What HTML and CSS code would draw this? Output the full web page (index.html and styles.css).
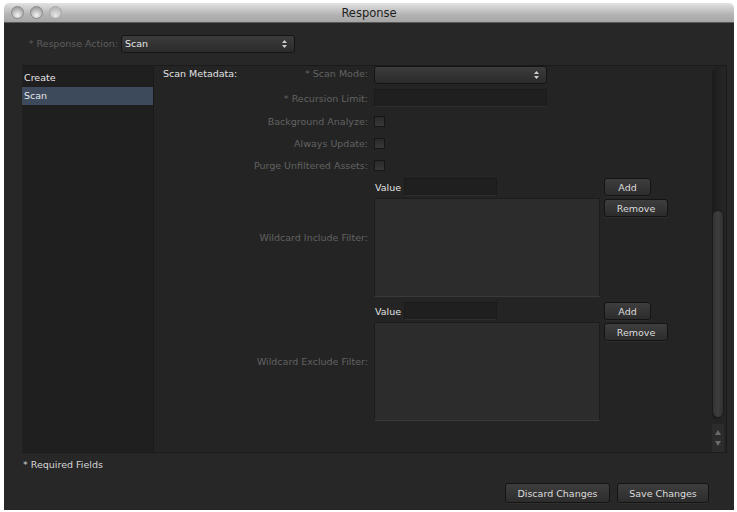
FILE: index.html
```html
<!DOCTYPE html>
<html>
<head>
    <meta charset="utf-8">
    <title>Response</title>
    <link rel="stylesheet" href="styles.css">
</head>
<body>
    <div class="window">
        <div class="titlebar">
            <div class="lights">
                <span class="light"></span>
                <span class="light"></span>
                <span class="light off"></span>
            </div>
            <div class="title">Response</div>
        </div>

        <div class="content">
            <div class="action-row">
                <span class="action-label">* Response Action:</span>
                <div class="select action-select">
                    <span>Scan</span>
                    <svg class="arrows" width="5" height="8" viewBox="0 0 5 8"><path d="M2.5 0 L5 3 L0 3 Z M2.5 8 L5 5 L0 5 Z" fill="#cfcfcf"/></svg>
                </div>
            </div>

            <div class="panel">
                <ul class="nav">
                    <li>Create</li>
                    <li class="active">Scan</li>
                </ul>

                <div class="form">
                    <div class="grid">
                        <div class="label split"><span class="heading">Scan Metadata:</span><span>* Scan Mode:</span></div>
                        <div class="field">
                            <div class="select mode-select">
                                <span></span>
                                <svg class="arrows" width="5" height="8" viewBox="0 0 5 8"><path d="M2.5 0 L5 3 L0 3 Z M2.5 8 L5 5 L0 5 Z" fill="#cfcfcf"/></svg>
                            </div>
                        </div>

                        <div class="label">* Recursion Limit:</div>
                        <div class="field"><div class="input wide"></div></div>

                        <div class="label check-row">Background Analyze:</div>
                        <div class="field check-row"><span class="checkbox"></span></div>

                        <div class="label check-row">Always Update:</div>
                        <div class="field check-row"><span class="checkbox"></span></div>

                        <div class="label check-row">Purge Unfiltered Assets:</div>
                        <div class="field check-row"><span class="checkbox"></span></div>

                        <div class="label">Wildcard Include Filter:</div>
                        <div class="field filter">
                            <div class="filter-main">
                                <div class="value-row">
                                    <span class="value-label">Value</span>
                                    <div class="input value"></div>
                                </div>
                                <div class="listbox"></div>
                            </div>
                            <div class="filter-buttons">
                                <button class="btn add">Add</button>
                                <button class="btn remove">Remove</button>
                            </div>
                        </div>

                        <div class="label">Wildcard Exclude Filter:</div>
                        <div class="field filter">
                            <div class="filter-main">
                                <div class="value-row">
                                    <span class="value-label">Value</span>
                                    <div class="input value"></div>
                                </div>
                                <div class="listbox"></div>
                            </div>
                            <div class="filter-buttons">
                                <button class="btn add">Add</button>
                                <button class="btn remove">Remove</button>
                            </div>
                        </div>
                    </div>

                    <div class="scrollbar">
                        <div class="track"><div class="thumb"></div></div>
                        <div class="steppers">
                            <svg width="6" height="5" viewBox="0 0 6 5"><path d="M3 0 L6 5 L0 5 Z" fill="#6a6a6a"/></svg>
                            <svg width="6" height="5" viewBox="0 0 6 5"><path d="M0 0 L6 0 L3 5 Z" fill="#6a6a6a"/></svg>
                        </div>
                    </div>
                </div>
            </div>

            <div class="required">* Required Fields</div>

            <div class="actions">
                <button class="btn discard">Discard Changes</button>
                <button class="btn save">Save Changes</button>
            </div>
        </div>
    </div>
</body>
</html>
```

FILE: styles.css
```css
body{
    margin:0;
    background:#fff;
    font-family:"DejaVu Sans", sans-serif;
    font-size:9.5px;
}

.window{
    margin:3px 0 0 4px;
    width:730px;
}

.titlebar{
    height:19px;
    position:relative;
    border-radius:5px 5px 0 0;
    background:linear-gradient(#e2e2e2, #b4b4b4 60%, #a6a6a6);
    border-bottom:1px solid #5a5a5a;
    display:flex;
    align-items:center;
    justify-content:center;
}
.lights{
    position:absolute;
    left:7px;
    top:3px;
    display:flex;
    gap:6px;
}
.light{
    width:13px;
    height:13px;
    box-sizing:border-box;
    border-radius:50%;
    border:1px solid #8a8a8a;
    background:radial-gradient(circle at 50% 75%, #f4f4f4, #b8b8b8 55%, #8e8e8e);
}
.light.off{
    border-color:#a8a8a8;
    background:radial-gradient(circle at 50% 75%, #e6e6e6, #c4c4c4 55%, #ababab);
}
.title{
    color:#1e1e1e;
    font-size:11.5px;
}

.content{
    height:487px;
    background:#272727;
    padding:0 7px 0 18px;
    display:flex;
    flex-direction:column;
    box-sizing:border-box;
}

.action-row{
    display:flex;
    align-items:center;
    margin-top:11px;
    height:19px;
}
.action-label{
    width:96px;
    color:#5e5e5e;
    text-align:right;
    margin-right:3px;
}
.select{
    box-sizing:border-box;
    height:18px;
    border:1px solid #151515;
    border-radius:3px;
    background:linear-gradient(#3c3c3c, #2b2b2b);
    display:flex;
    align-items:center;
    justify-content:space-between;
    padding:0 7px 0 3px;
    color:#e4e4e4;
}
.action-select{ width:174px; }
.mode-select{ width:173px; }

.panel{
    margin-top:12px;
    height:388px;
    box-sizing:border-box;
    display:flex;
    border:1px solid #1a1a1a;
    border-left:0;
}
.nav{
    list-style:none;
    margin:0;
    padding:3px 0 0 0;
    width:131px;
    background:#1f1f1f;
    border-right:1px solid #1a1a1a;
}
.nav li{
    height:18px;
    line-height:18px;
    padding-left:2px;
    color:#e6e6e6;
}
.nav li.active{
    background:#3c4a5c;
}

.form{
    flex:1;
    display:flex;
    background:#242424;
}
.grid{
    flex:1;
    display:grid;
    grid-template-columns:205px auto;
    column-gap:6px;
    row-gap:5px;
    padding:0 0 0 9px;
    align-content:start;
    align-items:center;
}
.label{
    color:#626262;
    text-align:right;
}
.split{
    display:flex;
    justify-content:space-between;
    align-self:start;
    padding-top:2px;
}
.heading{
    color:#e2e2e2;
}
.field{
    display:flex;
    align-items:center;
}
.check-row{
    height:17px;
    line-height:19px;
}
.input{
    box-sizing:border-box;
    height:18px;
    background:#1f1f1f;
    border:1px solid #1a1a1a;
    border-bottom-color:#2e2e2e;
}
.input.wide{ width:173px; }
.input.value{ width:93px; }
.checkbox{
    width:11px;
    height:11px;
    margin-top:2px;
    box-sizing:border-box;
    background:linear-gradient(#2a2a2a, #383838);
    border:1px solid #161616;
}

.filter{
    align-items:flex-start;
    gap:4px;
}
.filter-main{
    width:226px;
    display:flex;
    flex-direction:column;
    gap:2px;
}
.value-row{
    display:flex;
    align-items:center;
    height:18px;
}
.value-label{
    color:#e2e2e2;
    width:29px;
    padding-left:1px;
}
.listbox{
    height:99px;
    box-sizing:border-box;
    background:#2c2c2c;
    border:1px solid #1c1c1c;
    border-bottom-color:#3a3a3a;
}
.filter-buttons{
    display:flex;
    flex-direction:column;
    gap:3px;
}

.btn{
    box-sizing:border-box;
    font:inherit;
    color:#dcdcdc;
    height:18px;
    padding:0;
    border:1px solid #141414;
    border-radius:3px;
    background:linear-gradient(#3e3e3e, #2c2c2c);
    box-shadow:0 1px 0 rgba(255,255,255,0.04);
}
.btn.add{ width:47px; }
.btn.remove{ width:64px; }

.scrollbar{
    width:12px;
    margin:1px 2px 0 0;
    display:flex;
    flex-direction:column;
}
.track{
    height:354px;
    border-radius:6px;
    background:linear-gradient(90deg, #1b1b1b, #262626);
    display:flex;
    flex-direction:column;
}
.thumb{
    margin-top:auto;
    margin-bottom:2px;
    height:208px;
    border-radius:6px;
    background:linear-gradient(90deg, #333, #3e3e3e 50%, #303030);
    border:1px solid #1a1a1a;
    box-sizing:border-box;
}
.steppers{
    margin-top:4px;
    height:28px;
    background:#2c2c2c;
    display:flex;
    flex-direction:column;
    align-items:center;
    justify-content:space-around;
    padding:3px 0;
    box-sizing:border-box;
}

.required{
    color:#d6d6d6;
    margin-top:6px;
    padding-left:1px;
}

.actions{
    margin-top:auto;
    margin-bottom:7px;
    margin-right:18px;
    display:flex;
    justify-content:flex-end;
    gap:7px;
}
.actions .btn{
    height:20px;
}
.btn.discard{ width:105px; }
.btn.save{ width:92px; }
```
